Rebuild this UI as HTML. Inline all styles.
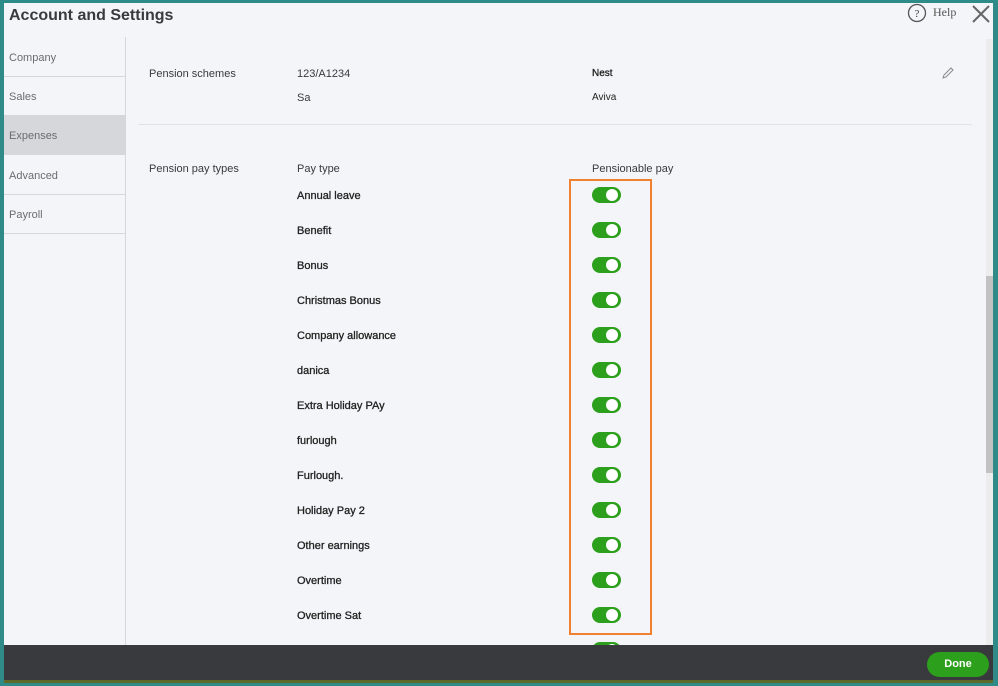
<!DOCTYPE html>
<html><head><style>
*{margin:0;padding:0;box-sizing:border-box}
body{width:998px;height:686px;overflow:hidden;background:#2e8b88;font-family:"Liberation Sans",sans-serif;position:relative}
.win{position:absolute;left:4px;top:3px;width:989px;height:677px;background:#f4f5f8;overflow:hidden}
.t{position:absolute;font-size:11px;color:#393a3d;white-space:nowrap}
.b{color:#222;font-size:11px;-webkit-text-stroke:0.3px #222}
.nav{position:absolute;left:0;width:121px;height:39px;border-bottom:1px solid #d4d7dc;font-size:11px;color:#6b6c72;padding:14px 0 0 5px}
.tg{position:absolute;left:588px;width:29px;height:16px;border-radius:8px;background:#2ca01c}
.tg:after{content:"";position:absolute;right:3px;top:2px;width:12px;height:12px;border-radius:6px;background:#fff}
</style></head><body>
<div class="win">
<div class="t" style="left:5px;top:4px;font-size:16px;font-weight:bold;color:#393a3d">Account and Settings</div>
<svg style="position:absolute;left:903px;top:0" width="20" height="20"><circle cx="10" cy="10" r="8.5" fill="none" stroke="#555" stroke-width="1.3"/><text x="10" y="14" font-size="11" text-anchor="middle" fill="#444" font-family="Liberation Serif">?</text></svg>
<div class="t" style="left:929px;top:2px;font-size:12px;font-family:'Liberation Serif',serif;color:#555">Help</div>
<svg style="position:absolute;left:967px;top:1px" width="20" height="20"><path d="M2 2L18 18M18 2L2 18" stroke="#666" stroke-width="2"/></svg>
<div style="position:absolute;left:0;top:34px;width:122px;height:640px;background:#f4f5f8;border-right:1px solid #d4d7dc"></div>
<div class="nav" style="top:35px">Company</div>
<div class="nav" style="top:74px">Sales</div>
<div class="nav" style="top:113px;background:#d5d7db">Expenses</div>
<div class="nav" style="top:153px">Advanced</div>
<div class="nav" style="top:192px">Payroll</div>
<div class="t" style="left:145px;top:65px">Pension schemes</div>
<div class="t" style="left:293px;top:65px">123/A1234</div>
<div class="t" style="left:293px;top:89px">Sa</div>
<div class="t b" style="left:588px;top:65px;font-size:10px">Nest</div>
<div class="t" style="left:588px;top:89px;font-size:10px;color:#222">Aviva</div>
<svg style="position:absolute;left:937px;top:63px" width="14" height="14"><path d="M2 12L3 9L10 2L12 4L5 11Z" fill="none" stroke="#888" stroke-width="1"/></svg>
<div style="position:absolute;left:134px;top:121px;width:834px;height:1px;background:#e0e2e6"></div>
<div class="t" style="left:145px;top:160px">Pension pay types</div>
<div class="t" style="left:293px;top:160px">Pay type</div>
<div class="t" style="left:588px;top:160px">Pensionable pay</div>
<div class="t b" style="left:293px;top:187px">Annual leave</div><div class="tg" style="top:184px"></div>
<div class="t b" style="left:293px;top:222px">Benefit</div><div class="tg" style="top:219px"></div>
<div class="t b" style="left:293px;top:257px">Bonus</div><div class="tg" style="top:254px"></div>
<div class="t b" style="left:293px;top:292px">Christmas Bonus</div><div class="tg" style="top:289px"></div>
<div class="t b" style="left:293px;top:327px">Company allowance</div><div class="tg" style="top:324px"></div>
<div class="t b" style="left:293px;top:362px">danica</div><div class="tg" style="top:359px"></div>
<div class="t b" style="left:293px;top:397px">Extra Holiday PAy</div><div class="tg" style="top:394px"></div>
<div class="t b" style="left:293px;top:432px">furlough</div><div class="tg" style="top:429px"></div>
<div class="t b" style="left:293px;top:467px">Furlough.</div><div class="tg" style="top:464px"></div>
<div class="t b" style="left:293px;top:502px">Holiday Pay 2</div><div class="tg" style="top:499px"></div>
<div class="t b" style="left:293px;top:537px">Other earnings</div><div class="tg" style="top:534px"></div>
<div class="t b" style="left:293px;top:572px">Overtime</div><div class="tg" style="top:569px"></div>
<div class="t b" style="left:293px;top:607px">Overtime Sat</div><div class="tg" style="top:604px"></div>
<div class="tg" style="top:639px"></div>
<div style="position:absolute;left:565px;top:176px;width:83px;height:456px;border:2px solid #f0822f"></div>
<div style="position:absolute;left:982px;top:36px;width:7px;height:606px;background:#ececec"></div>
<div style="position:absolute;left:982px;top:273px;width:7px;height:197px;background:#c2c2c2"></div>
<div style="position:absolute;left:0;top:642px;width:989px;height:35px;background:#393a3d"></div>
<div style="position:absolute;left:923px;top:649px;width:62px;height:25px;border-radius:13px;background:#2ca01c;color:#fff;font-weight:bold;font-size:11px;text-align:center;line-height:25px">Done</div>
</div>
<div style="position:absolute;left:4px;top:680px;width:989px;height:3px;background:#5d6a2a"></div>
</body></html>
